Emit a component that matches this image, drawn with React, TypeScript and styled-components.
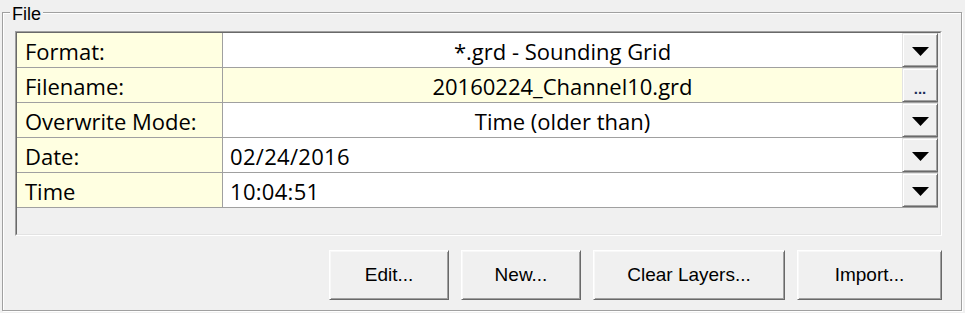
import React from 'react';
import styled, { createGlobalStyle } from 'styled-components';

const GlobalStyle = createGlobalStyle`
  html, body { margin: 0; padding: 0; background: #f0f0f0; }
  body { width: 965px; height: 313px; overflow: hidden; }
  * { box-sizing: border-box; }
`;

const Page = styled.div`
  width: 965px;
  height: 313px;
  padding: 12px 0 0 2px;
`;

const GroupBox = styled.section`
  position: relative;
  width: 960px;
  height: 299px;
  border: 1px solid #a0a0a0;
  box-shadow: inset 1px 1px 0 #fff, 1px 1px 0 #fff;
  padding: 18px 19px 0 12px;
  display: flex;
  flex-direction: column;
  gap: 14px;
`;

const Legend = styled.div`
  position: absolute;
  top: -9px;
  left: 7px;
  padding: 0 2px;
  background: #f0f0f0;
  font: 18px/21px 'Liberation Sans', Arial, sans-serif;
  color: #000;
`;

const GridFrame = styled.div`
  height: 205px;
  border: 1px solid;
  border-color: #a0a0a0 #fff #fff #a0a0a0;
`;

const GridInner = styled.div`
  height: 100%;
  border: 1px solid;
  border-color: #696969 #e3e3e3 #e3e3e3 #696969;
  background: #f0f0f0;
`;

const Row = styled.div`
  width: 921px;
  height: 35px;
  display: grid;
  grid-template-columns: 206px 1fr 36px;
  border-bottom: 1px solid #a0a0a0;
  font: 22px 'Open Sans', 'Noto Sans', sans-serif;
  color: #000;
`;

const Label = styled.div`
  background: #ffffe1;
  border-right: 1px solid #a0a0a0;
  padding: 2px 0 0 8px;
  display: flex;
  align-items: center;
  white-space: nowrap;
`;

const Value = styled.div<{ $center?: boolean; $tint?: boolean }>`
  background: ${(p) => (p.$tint ? '#ffffe1' : '#fff')};
  padding: 2px 0 0 ${(p) => (p.$center ? '0' : '7px')};
  display: flex;
  align-items: center;
  justify-content: ${(p) => (p.$center ? 'center' : 'flex-start')};
  white-space: nowrap;
  letter-spacing: ${(p) => (p.$center ? '0' : '0.3px')};
`;

const CellButton = styled.div`
  height: 34px;
  background: #f0f0f0;
  border: 1px solid;
  border-color: #e3e3e3 #696969 #696969 #e3e3e3;
  box-shadow: inset 1px 1px 0 #fff, inset -1px -1px 0 #a0a0a0;
  display: flex;
  align-items: center;
  justify-content: center;
`;

const EllipsisButton = styled(CellButton)`
  align-items: flex-end;
  padding-bottom: 5px;
  font: bold 15px/14px 'Liberation Sans', Arial, sans-serif;
  color: #1b2f5a;
`;

const Arrow = () => (
  <svg width="17" height="9" viewBox="0 0 17 9" style={{ marginTop: 2 }}>
    <polygon points="0,0 17,0 8.5,9" fill="#000" />
  </svg>
);

const ButtonBar = styled.div`
  display: flex;
  justify-content: flex-end;
  gap: 12px;
`;

const PushButton = styled.button<{ $w: number }>`
  width: ${(p) => p.$w}px;
  height: 50px;
  margin: 0;
  padding: 0;
  background: #f0f0f0;
  border: 1px solid;
  border-color: #fff #696969 #696969 #fff;
  box-shadow: inset 1px 1px 0 #f8f8f8, inset -1px -1px 0 #a0a0a0;
  font: 19px 'Liberation Sans', Arial, sans-serif;
  color: #000;
`;

type Field = { label: string; value: string; center?: boolean; tint?: boolean; ellipsis?: boolean };

const fields: Field[] = [
  { label: 'Format:', value: '*.grd - Sounding Grid', center: true },
  { label: 'Filename:', value: '20160224_Channel10.grd', center: true, tint: true, ellipsis: true },
  { label: 'Overwrite Mode:', value: 'Time (older than)', center: true },
  { label: 'Date:', value: '02/24/2016' },
  { label: 'Time', value: '10:04:51' },
];

const buttons = [
  { text: 'Edit...', w: 120 },
  { text: 'New...', w: 120 },
  { text: 'Clear Layers...', w: 192 },
  { text: 'Import...', w: 145 },
];

export default function App() {
  return (
    <>
      <GlobalStyle />
      <Page>
        <GroupBox>
          <Legend>File</Legend>
          <GridFrame>
            <GridInner>
              {fields.map((f) => (
                <Row key={f.label}>
                  <Label>{f.label}</Label>
                  <Value $center={f.center} $tint={f.tint}>
                    {f.value}
                  </Value>
                  {f.ellipsis ? (
                    <EllipsisButton>...</EllipsisButton>
                  ) : (
                    <CellButton>
                      <Arrow />
                    </CellButton>
                  )}
                </Row>
              ))}
            </GridInner>
          </GridFrame>
          <ButtonBar>
            {buttons.map((b) => (
              <PushButton key={b.text} $w={b.w}>
                {b.text}
              </PushButton>
            ))}
          </ButtonBar>
        </GroupBox>
      </Page>
    </>
  );
}
